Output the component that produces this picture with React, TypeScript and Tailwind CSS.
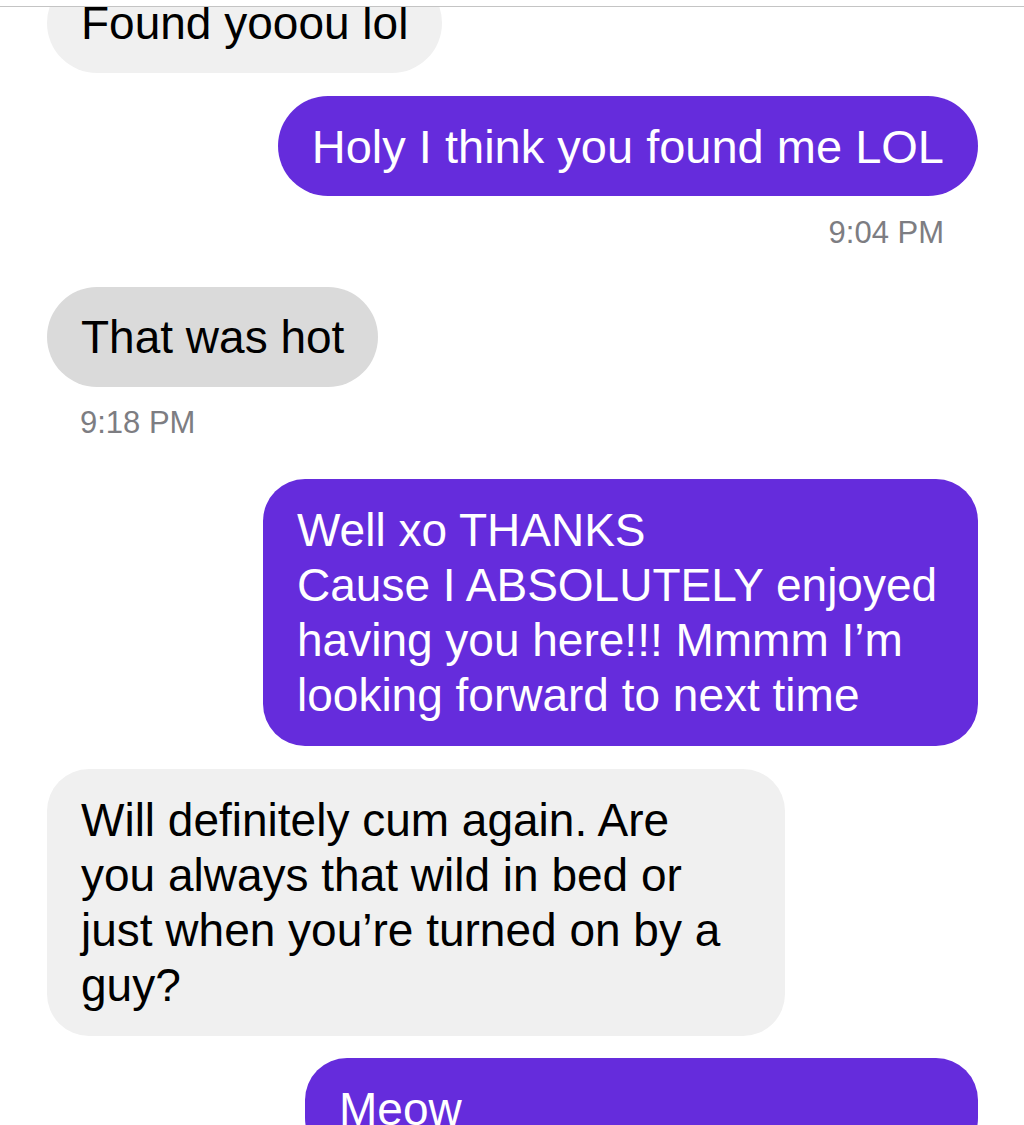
import React from "react";

const font = { fontFamily: '"Liberation Sans", Arial, sans-serif' };

export default function App() {
  return (
    <div
      className="w-[1024px] h-[1125px] overflow-hidden bg-white flex flex-col"
      style={font}
    >
      <div className="h-[7px] shrink-0 bg-white border-b border-[#c4c4c4]" />
      <div className="flex-1 overflow-hidden pl-[47px] pr-[46px] flex flex-col">
        <div className="shrink-0 self-start -mt-[34px] h-[100px] rounded-full bg-[#f0f0f0] px-[34px] flex items-center text-[46px] leading-[55px] text-black">
          Found yooou lol
        </div>
        <div className="shrink-0 self-end mt-[23px] h-[100px] rounded-full bg-[#652cdc] px-[34px] flex items-center text-[47px] leading-[55px] text-white">
          Holy I think you found me LOL
        </div>
        <div className="shrink-0 self-end mr-[34px] mt-[19px] text-[31px] leading-[36px] text-[#7d7d82]">
          9:04 PM
        </div>
        <div className="shrink-0 self-start mt-[36px] h-[100px] rounded-full bg-[#dadada] px-[34px] flex items-center text-[46px] leading-[55px] text-black">
          That was hot
        </div>
        <div className="shrink-0 self-start ml-[33px] mt-[18px] text-[31px] leading-[36px] text-[#7d7d82]">
          9:18 PM
        </div>
        <div className="shrink-0 self-end mt-[38px] w-[715px] rounded-[42px] bg-[#652cdc] pl-[34px] pr-[10px] pt-[24px] pb-[23px] text-[46px] leading-[55px] text-white whitespace-nowrap">
          Well xo THANKS
          <br />
          Cause I ABSOLUTELY enjoyed
          <br />
          having you here!!! Mmmm I’m
          <br />
          looking forward to next time
        </div>
        <div className="shrink-0 self-start mt-[23px] w-[738px] rounded-[42px] bg-[#f0f0f0] pl-[34px] pr-[10px] pt-[24px] pb-[23px] text-[46px] leading-[55px] text-black whitespace-nowrap">
          Will definitely cum again. Are
          <br />
          you always that wild in bed or
          <br />
          just when you’re turned on by a
          <br />
          guy?
        </div>
        <div className="shrink-0 self-end mt-[22px] w-[673px] rounded-[42px] bg-[#652cdc] pl-[34px] pr-[10px] pt-[24px] pb-[23px] text-[46px] leading-[55px] text-white">
          Meow
        </div>
      </div>
    </div>
  );
}
